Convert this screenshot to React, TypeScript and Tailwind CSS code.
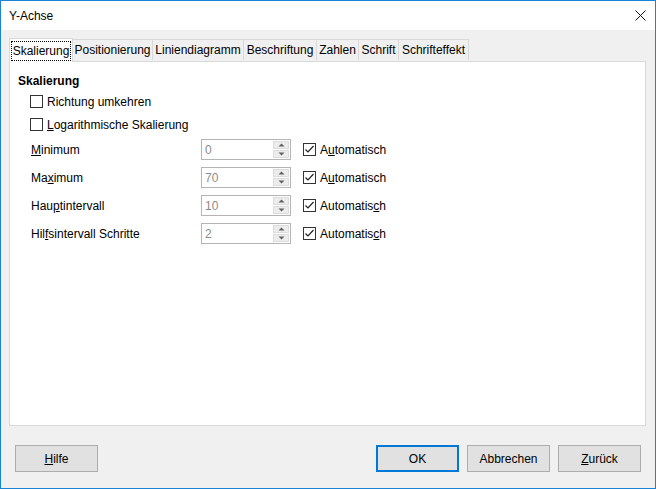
const font = { fontFamily: '"Liberation Sans", Arial, sans-serif' }

const tabs = [
  { label: 'Positionierung', w: 'w-[80px]' },
  { label: 'Liniendiagramm', w: 'w-[91px]' },
  { label: 'Beschriftung', w: 'w-[73px]' },
  { label: 'Zahlen', w: 'w-[42px]' },
  { label: 'Schrift', w: 'w-[40px]' },
  { label: 'Schrifteffekt', w: 'w-[70px]' },
]

const CheckBox = ({ checked }: { checked?: boolean }) => (
  <div className="w-[13px] h-[13px] border border-[#333333] bg-white flex items-center justify-center shrink-0">
    {checked && (
      <svg width="11" height="11" viewBox="0 0 11 11">
        <path d="M1.5 5.5 L4 8 L9.5 2" fill="none" stroke="#222" strokeWidth="1.2" />
      </svg>
    )}
  </div>
)

const SpinBox = ({ value }: { value: string }) => (
  <div className="w-[90px] h-[21px] border border-[#b4b4b4] bg-white flex items-center">
    <span className="flex-1 pl-[3px] text-[12px] text-[#8c8c8c] leading-none">{value}</span>
    <div className="w-[16px] h-[17px] mr-[1px] flex flex-col gap-[1px]">
      <div className="flex-1 bg-[#ececec] border border-[#dcdcdc] flex items-center justify-center">
        <svg width="7" height="4" viewBox="0 0 7 4"><path d="M0.5 3.5 L3.5 0.5 L6.5 3.5 Z" fill="#606060" /></svg>
      </div>
      <div className="flex-1 bg-[#ececec] border border-[#dcdcdc] flex items-center justify-center">
        <svg width="7" height="4" viewBox="0 0 7 4"><path d="M0.5 0.5 L3.5 3.5 L6.5 0.5 Z" fill="#606060" /></svg>
      </div>
    </div>
  </div>
)

const rows = [
  { label: <><u>M</u>inimum</>, value: '0', auto: <>A<u>u</u>tomatisch</> },
  { label: <>Ma<u>x</u>imum</>, value: '70', auto: <>A<u>u</u>tomatisch</> },
  { label: <>Hau<u>p</u>tintervall</>, value: '10', auto: <>Automatis<u>c</u>h</> },
  { label: <>Hil<u>f</u>sintervall Schritte</>, value: '2', auto: <>Automatis<u>c</u>h</> },
]

const Button = ({ children, primary }: { children: React.ReactNode; primary?: boolean }) => (
  <div
    className={`w-[83px] h-[27px] bg-[#e1e1e1] flex items-center justify-center text-[12px] text-black ${
      primary ? 'border-2 border-[#0078d7]' : 'border border-[#adadad]'
    }`}
  >
    {children}
  </div>
)

export default function App() {
  return (
    <div className="w-[656px] h-[489px] border border-[#1883d7] bg-white flex flex-col text-black" style={font}>
      {/* title bar */}
      <div className="h-[29px] flex items-center justify-between pl-[8px] pr-[9px] bg-white">
        <span className="text-[12px]">Y-Achse</span>
        <svg width="11" height="11" viewBox="0 0 11 11">
          <path d="M0.5 0.5 L10.5 10.5 M10.5 0.5 L0.5 10.5" stroke="#111" strokeWidth="1" />
        </svg>
      </div>

      <div className="flex-1 bg-[#f0f0f0] flex flex-col px-[8px] pt-[8px]">
        {/* tabs */}
        <div className="flex items-end h-[24px] relative z-10 -mb-[1px] text-[12px]">
          <div className="w-[64px] h-[24px] bg-white border border-b-0 border-[#d9d9d9] flex items-center justify-center">
            <span className="border border-dotted border-black px-[1px] leading-[18px]">Skalierung</span>
          </div>
          {tabs.map((t) => (
            <div
              key={t.label}
              className={`${t.w} h-[21px] mb-[2px] border-t border-r border-[#d9d9d9] bg-[#f0f0f0] flex items-center justify-center`}
            >
              {t.label}
            </div>
          ))}
        </div>

        {/* panel */}
        <div className="w-[637px] h-[365px] bg-white border border-[#d9d9d9] pl-[8px] pt-[11px] text-[12px]">
          <div className="h-[16px] leading-[16px] font-bold">Skalierung</div>
          <div className="pl-[12px] mt-[1px]">
            <div className="h-[23px] flex items-center gap-[4px]">
              <CheckBox />
              <span>Richtung umkehren</span>
            </div>
            <div className="h-[23px] flex items-center gap-[4px]">
              <CheckBox />
              <span><u>L</u>ogarithmische Skalierung</span>
            </div>
          </div>
          <div className="mt-[3px] pl-[13px] flex flex-col gap-[7px]">
            {rows.map((r, i) => (
              <div key={i} className="h-[21px] flex items-center">
                <span className="w-[170px]">{r.label}</span>
                <SpinBox value={r.value} />
                <div className="ml-[12px] flex items-center gap-[4px]">
                  <CheckBox checked />
                  <span>{r.auto}</span>
                </div>
              </div>
            ))}
          </div>
        </div>

        {/* buttons */}
        <div className="mt-[19px] flex items-center px-[6px]">
          <Button><u>H</u>ilfe</Button>
          <div className="flex-1" />
          <div className="flex gap-[8px]">
            <Button primary>OK</Button>
            <Button>Abbrechen</Button>
            <Button><u>Z</u>urück</Button>
          </div>
        </div>
      </div>
    </div>
  )
}
